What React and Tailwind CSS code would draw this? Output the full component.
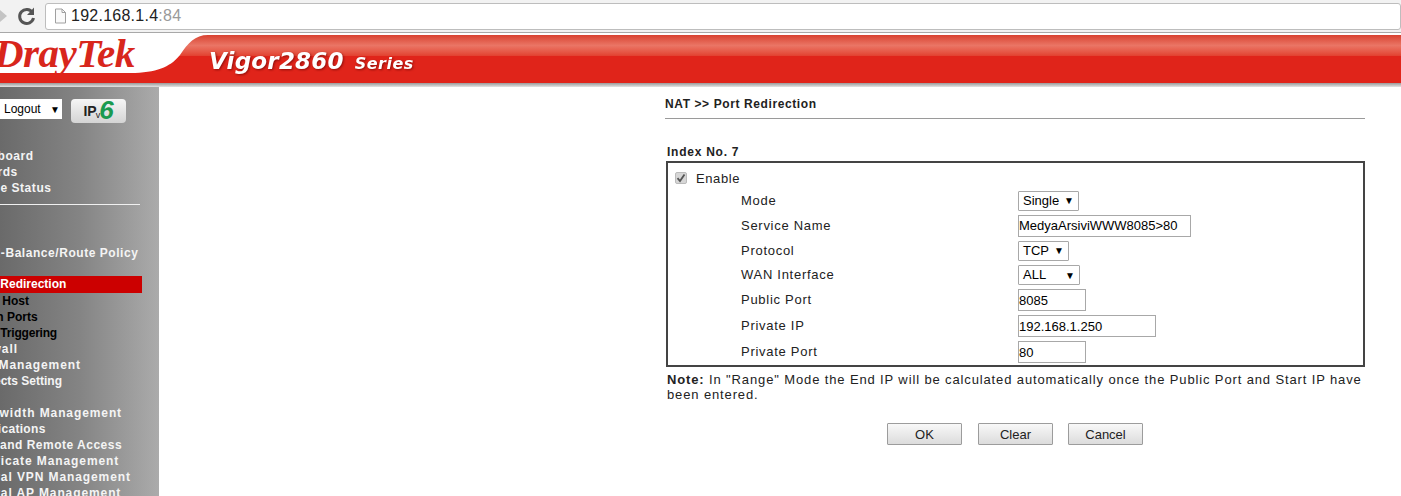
import React from "react";

function Row({ text, cls, color = "text-[#f4f4f4]", rowCls = "h-4" }) {
  return (
    <div className={`leading-4 whitespace-nowrap ${rowCls} ${color}`}>
      <span className={`inline-block ${cls}`}>{text}</span>
    </div>
  );
}

function Sidebar() {
  return (
    <aside className="w-[159px] shrink-0 overflow-hidden bg-gradient-to-r from-[#6a6a6a] via-[#848484] to-[#ababab] font-['Liberation_Sans',sans-serif] font-bold text-[12px]">
      <div className="flex items-start gap-[9px] pt-[12px]">
        <div className="w-[62px] h-[20px] bg-white flex items-center justify-between pl-[4px] pr-[2px] font-normal text-[12px] text-black">
          <span>Logout</span>
          <span className="text-[10px]">▼</span>
        </div>
        <div className="w-[55px] h-[24px] rounded-[4px] bg-gradient-to-b from-[#f6f6f6] to-[#d4d4d4] flex items-center justify-center">
          <span className="text-[14px] text-[#222] leading-none">IP</span>
          <span className="text-[9px] text-[#222] leading-none mt-[8px] -ml-[1px] font-normal">v</span>
          <span className="text-[26px] text-[#1a9a50] italic leading-none -ml-[1px] -mt-[3px]">6</span>
        </div>
      </div>
      <div className="mt-[25px]">
        <Row text="Dashboard" cls="-ml-[34px] tracking-[0.55px]" />
        <Row text="Wizards" cls="-ml-[32px] tracking-[0.55px]" />
        <Row text="Online Status" cls="-ml-[33px] tracking-[0.55px]" />
      </div>
      <div className="h-px w-[140px] bg-[#f0f0f0] mt-[8px]" />
      <div className="mt-[40px]">
        <Row text="Load-Balance/Route Policy" cls="-ml-[30px] tracking-[0.55px]" />
      </div>
      <div className="mt-[15px]">
        <Row text="Port Redirection" cls="-ml-[27px]" color="text-white" rowCls="h-[17px] w-[142px] bg-[#cc0000]" />
        <Row text="DMZ Host" cls="-ml-[27px]" color="text-black" />
        <Row text="Open Ports" cls="-ml-[27px]" color="text-black" />
        <Row text="Port Triggering" cls="-ml-[26px] tracking-[-0.2px]" color="text-black" />
        <Row text="Firewall" cls="-ml-[34px] tracking-[0.9px]" />
        <Row text="User Management" cls="-ml-[36px] tracking-[0.9px]" />
        <Row text="Objects Setting" cls="-ml-[26px]" />
      </div>
      <div className="mt-[16px]">
        <Row text="Bandwidth Management" cls="-ml-[34px] tracking-[0.9px]" />
        <Row text="Applications" cls="-ml-[30px] tracking-[0.3px]" />
        <Row text="VPN and Remote Access" cls="-ml-[30px] tracking-[0.5px]" />
        <Row text="Certificate Management" cls="-ml-[36px] tracking-[0.9px]" />
        <Row text="Central VPN Management" cls="-ml-[35px] tracking-[0.9px]" />
        <Row text="Central AP Management" cls="-ml-[35px] tracking-[0.9px]" />
      </div>
    </aside>
  );
}

function Toolbar() {
  return (
    <div className="h-[33px] bg-[#f2f2f2] border-b border-[#a8a8a8] flex items-center relative">
      <svg width="8" height="14" viewBox="0 0 8 14" className="text-[#c4c4c4]">
        <path d="M0 1 L7 7 L0 13 Z" fill="currentColor" />
      </svg>
      <svg width="20" height="20" viewBox="0 0 20 20" className="ml-[9px] text-[#555]">
        <path d="M15.5 6.5 A7 7 0 1 0 16.5 12" fill="none" stroke="currentColor" strokeWidth="3" />
        <path d="M17 1.5 V9 H10 Z" fill="currentColor" />
      </svg>
      <div className="ml-[8px] flex-1 h-[27px] bg-white border border-[#bdbdbd] rounded-[3px] flex items-center pl-[8px] font-['Liberation_Sans',sans-serif] text-[16px]">
        <svg width="13" height="16" viewBox="0 0 13 16" className="mr-[4px]">
          <path d="M1.5 1 H8 L11.5 4.5 V15 H1.5 Z M8 1 V4.5 H11.5" fill="#fafafa" stroke="#a0a0a0" />
        </svg>
        <span className="text-[#222] tracking-[0.25px]">192.168.1.4</span>
        <span className="text-[#9a9a9a] tracking-[0.25px]">:84</span>
      </div>
    </div>
  );
}

function Banner() {
  return (
    <div className="h-[48px] mt-[2px] relative overflow-hidden bg-[#e0241a]">
      <div className="absolute left-0 right-0 top-0 h-[21px] bg-gradient-to-b from-[#d8402f] via-[#ea7565] to-[#e2402f]" />
      <svg width="1401" height="48" viewBox="0 0 1401 48" className="absolute left-0 top-0">
        <path d="M0 0 H208 C195 0 188 8 180 20 C172 30 160 37 135 38 H0 Z" fill="#ffffff" />
      </svg>
      <div className="relative flex items-start">
        <div className="w-[209px] h-[38px] overflow-hidden font-['Liberation_Serif',serif] italic font-bold text-[#d8261c] text-[41px] leading-[36px] whitespace-nowrap tracking-[-0.5px]">
          <span className="inline-block -ml-[6px]">DrayTek</span>
        </div>
        <div className="pt-[13px] font-['DejaVu_Sans',sans-serif] italic font-bold text-white leading-[26px] whitespace-nowrap drop-shadow-[1px_1px_1px_rgba(90,0,0,0.6)]">
          <span className="text-[23px] tracking-[0.2px]">Vigor2860</span>
          <span className="text-[16px] ml-[11px] tracking-[0.5px]">Series</span>
        </div>
      </div>
    </div>
  );
}

function Select({ value, w }) {
  return (
    <div className={`h-[20px] ${w} border border-[#a8a8a8] bg-white rounded-[1px] flex items-center justify-between pl-[4px] pr-[4px] text-[13px] text-black`}>
      <span>{value}</span>
      <span className="text-[10px]">▼</span>
    </div>
  );
}

function Input({ value, w }) {
  return (
    <input
      readOnly
      value={value}
      className={`h-[22px] ${w} block border border-[#a8a8a8] bg-white pl-0 text-[13px] text-black outline-none`}
    />
  );
}

function FormRow({ label, h, children }) {
  return (
    <div className={`flex items-center ${h}`}>
      <span className="w-[277px] text-[#222] tracking-[0.72px]">{label}</span>
      {children}
    </div>
  );
}

const btn = "h-[22px] border border-[#9c9c9c] rounded-[1px] bg-gradient-to-b from-[#f8f8f8] to-[#dcdcdc]";

function Main() {
  return (
    <main className="flex-1 pl-[506px] font-['Liberation_Sans',sans-serif] text-[13px] overflow-hidden">
      <div className="w-[700px]">
        <div className="h-[32px] pt-[9px] font-bold text-[12px] text-[#222] tracking-[0.6px] leading-[16px] border-b border-[#9a9a9a]">
          NAT &gt;&gt; Port Redirection
        </div>
        <div className="mt-[24px] ml-[2px] h-[18px] font-bold text-[12px] leading-[18px] tracking-[0.75px] text-[#222]">Index No. 7</div>
        <div className="ml-[1px] w-[699px] h-[206px] border-2 border-[#444] pt-[6px]">
          <label className="flex items-center h-[20px] pl-[7px]">
            <span className="w-[12px] h-[12px] rounded-[2px] bg-[#d6d6d6] border border-[#bbb] flex items-center justify-center -mt-[3px]">
              <svg width="10" height="10" viewBox="0 0 10 10"><path d="M1.5 5.2 L4 8 L8.5 1.5" fill="none" stroke="#555" strokeWidth="1.8" /></svg>
            </span>
            <span className="ml-[9px] text-[#222] tracking-[0.6px]">Enable</span>
          </label>
          <div className="pl-[73px] -mt-[1px]">
            <FormRow label="Mode" h="h-[25px]"><Select value="Single" w="w-[61px]" /></FormRow>
            <FormRow label="Service Name" h="h-[25px]"><Input value="MedyaArsiviWWW8085>80" w="w-[173px]" /></FormRow>
            <FormRow label="Protocol" h="h-[25px]"><Select value="TCP" w="w-[51px]" /></FormRow>
            <FormRow label="WAN Interface" h="h-[24px]"><Select value="ALL" w="w-[62px]" /></FormRow>
            <FormRow label="Public Port" h="h-[26px]"><Input value="8085" w="w-[68px]" /></FormRow>
            <FormRow label="Private IP" h="h-[26px]"><Input value="192.168.1.250" w="w-[138px]" /></FormRow>
            <FormRow label="Private Port" h="h-[26px]"><Input value="80" w="w-[68px]" /></FormRow>
          </div>
        </div>
        <p className="mt-[5px] ml-[2px] w-[698px] text-[13px] leading-[15px] tracking-[0.87px] text-[#222]">
          <b>Note:</b> In "Range" Mode the End IP will be calculated automatically once the Public Port and Start IP have been entered.
        </p>
        <div className="mt-[21px] ml-[222px] flex text-[13px] text-[#222]">
          <button className={`${btn} w-[75px] pt-[1px]`}>OK</button>
          <button className={`${btn} w-[75px] ml-[16px] pt-[1px]`}>Clear</button>
          <button className={`${btn} w-[75px] ml-[15px] pt-[1px]`}>Cancel</button>
        </div>
      </div>
    </main>
  );
}

export default function App() {
  return (
    <div className="w-[1401px] h-[496px] overflow-hidden bg-white flex flex-col">
      <Toolbar />
      <Banner />
      <div className="h-[4px] bg-gradient-to-b from-[#9a9a9a] to-[#e4e4e4]" />
      <div className="flex flex-1 min-h-0">
        <Sidebar />
        <Main />
      </div>
    </div>
  );
}
